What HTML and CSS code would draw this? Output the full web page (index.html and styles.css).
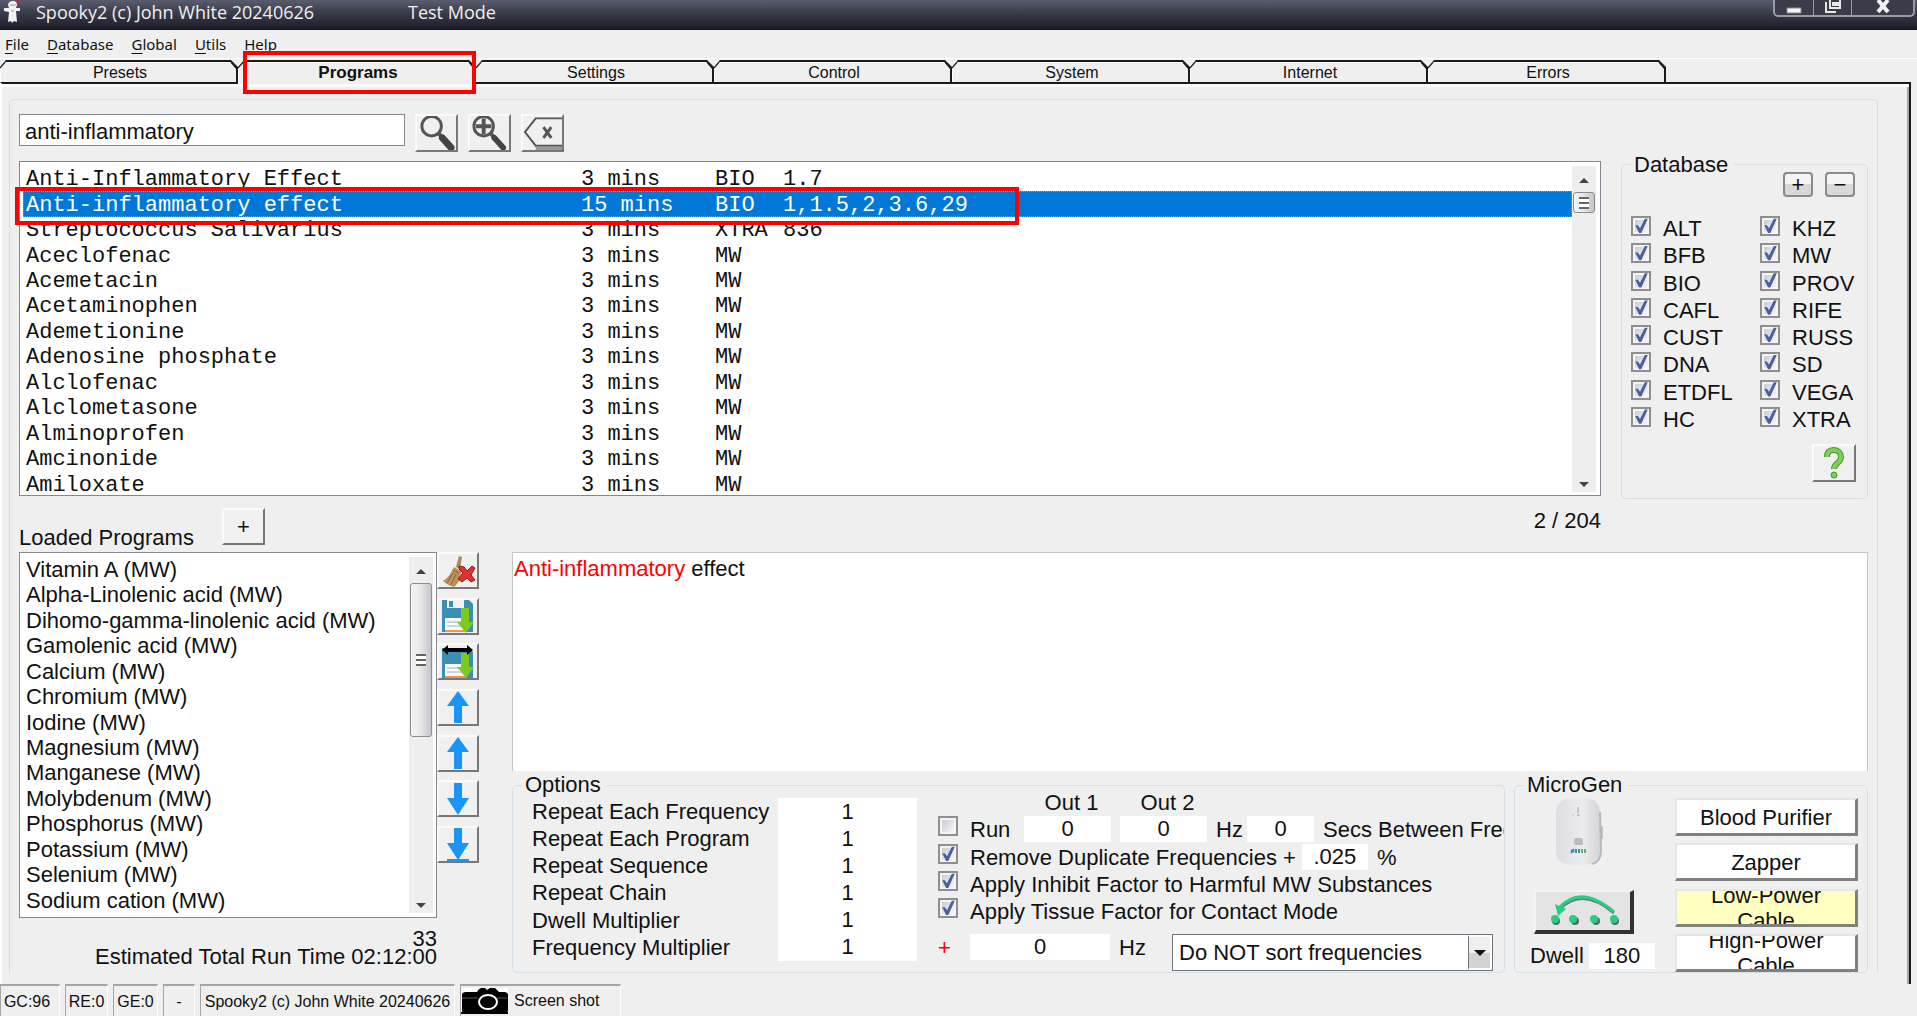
FILE: index.html
```html
<!DOCTYPE html>
<html lang="en">
<head>
    <meta charset="UTF-8">
    <meta name="viewport" content="width=device-width, initial-scale=1.0">
    <title>Spooky2</title>
    <link rel="stylesheet" href="styles.css">
</head>
<body>

    <div class="titlebar">
        <svg class="app-icon" width="18" height="24" viewBox="0 0 18 24">
            <path d="M13 0l3 1-2 4z" fill="#e02020"/>
            <path d="M9 1c3 0 4 2 4 4l-1 3 4 0 0 3-4 0 1 11-3-1-2 2-1-2-3 1 1-10-5-1 0-3 5 0-1-3c0-2 2-4 5-4z" fill="#f2f2f2"/>
            <path d="M6 5h6M7 11l3 0" stroke="#999" fill="none"/>
        </svg>
        <span class="app-name">Spooky2 (c) John White 20240626</span>
        <span>Test Mode</span>
        <div class="window-buttons">
            <button aria-label="Minimize"><svg width="16" height="16" viewBox="0 0 16 16"><rect x="1" y="8" width="14" height="5" fill="#f5f5f5" stroke="#888"/></svg></button>
            <button aria-label="Restore"><svg width="16" height="16" viewBox="0 0 16 16"><path d="M5 0v8h10V0M8 3h5v2H8zM1 2v10h10" fill="none" stroke="#e8e8e8" stroke-width="2"/></svg></button>
            <button class="close" aria-label="Close"><svg width="16" height="16" viewBox="0 0 16 16"><path d="M3 0l10 12M13 0L3 12" stroke="#f2f2f2" stroke-width="4"/></svg></button>
        </div>
    </div>

    <div class="menu">
        <button><u>F</u>ile</button>
        <button><u>D</u>atabase</button>
        <button><u>G</u>lobal</button>
        <button><u>U</u>tils</button>
        <button><u>H</u>elp</button>
    </div>

    <div class="tabs">
        <button class="tab">Presets</button>
        <div class="tab-marked">
            <button class="tab active">Programs</button>
            <div class="mark mark-tab"></div>
        </div>
        <button class="tab">Settings</button>
        <button class="tab">Control</button>
        <button class="tab">System</button>
        <button class="tab">Internet</button>
        <button class="tab">Errors</button>
    </div>

    <div class="page">
        <div class="frame">

            <div class="top">
                <div class="search-area">
                    <div class="search">
                        <input type="text" class="search-box" aria-label="Search" value="anti-inflammatory">
                        <button class="btn" aria-label="Search programs">
                            <svg width="40" height="34" viewBox="0 0 40 34"><circle cx="15" cy="10" r="10" fill="none" stroke="#555" stroke-width="3"/><path d="M22 17l4 5" stroke="#555" stroke-width="4"/><path d="M26 22l9 10" stroke="#444" stroke-width="7" stroke-linecap="round"/></svg>
                        </button>
                        <button class="btn" aria-label="Search more">
                            <svg width="40" height="34" viewBox="0 0 40 34"><circle cx="14" cy="10" r="10" fill="none" stroke="#555" stroke-width="3"/><path d="M14 2v16M6 10h16" stroke="#555" stroke-width="4"/><path d="M21 17l4 5" stroke="#555" stroke-width="4"/><path d="M25 22l9 10" stroke="#444" stroke-width="6" stroke-linecap="round"/></svg>
                        </button>
                        <button class="btn" aria-label="Clear search">
                            <svg width="40" height="34" viewBox="0 0 40 34"><path d="M40 2H13L2 16l11 14h27" fill="none" stroke="#555" stroke-width="2"/><path d="M13 33h27" stroke="#999" stroke-width="4"/><path d="M21 11l8 11M29 11l-8 11" stroke="#555" stroke-width="3"/></svg>
                        </button>
                    </div>

                    <div class="list results">
                        <div class="results-rows">
                            <table>
                                <tr><td class="name">Anti-Inflammatory Effect</td><td class="time">3 mins</td><td class="db">BIO</td><td>1.7</td></tr>
                                <tr class="selected"><td class="name">Anti-inflammatory effect</td><td class="time">15 mins</td><td class="db">BIO</td><td>1,1.5,2,3.6,29</td></tr>
                                <tr><td class="name">Streptococcus Salivarius</td><td class="time">3 mins</td><td class="db">XTRA</td><td>836</td></tr>
                                <tr><td class="name">Aceclofenac</td><td class="time">3 mins</td><td class="db">MW</td><td></td></tr>
                                <tr><td class="name">Acemetacin</td><td class="time">3 mins</td><td class="db">MW</td><td></td></tr>
                                <tr><td class="name">Acetaminophen</td><td class="time">3 mins</td><td class="db">MW</td><td></td></tr>
                                <tr><td class="name">Ademetionine</td><td class="time">3 mins</td><td class="db">MW</td><td></td></tr>
                                <tr><td class="name">Adenosine phosphate</td><td class="time">3 mins</td><td class="db">MW</td><td></td></tr>
                                <tr><td class="name">Alclofenac</td><td class="time">3 mins</td><td class="db">MW</td><td></td></tr>
                                <tr><td class="name">Alclometasone</td><td class="time">3 mins</td><td class="db">MW</td><td></td></tr>
                                <tr><td class="name">Alminoprofen</td><td class="time">3 mins</td><td class="db">MW</td><td></td></tr>
                                <tr><td class="name">Amcinonide</td><td class="time">3 mins</td><td class="db">MW</td><td></td></tr>
                                <tr><td class="name">Amiloxate</td><td class="time">3 mins</td><td class="db">MW</td><td></td></tr>
                            </table>
                        </div>
                        <div class="scrollbar">
                            <span class="arrow up"></span>
                            <span class="thumb"></span>
                            <span class="arrow down"></span>
                        </div>
                        <div class="mark mark-row"></div>
                    </div>

                    <div class="under-list">
                        <span class="loaded-title" id="loadedTitle">Loaded Programs</span>
                        <button class="btn btn-add">+</button>
                        <span class="counter">2 / 204</span>
                    </div>
                </div>

                <fieldset class="database">
                    <legend>Database</legend>
                    <div class="all-none">
                        <button>+</button>
                        <button>−</button>
                    </div>
                    <div class="db-checks">
                        <label class="check"><input type="checkbox" checked>ALT</label>
                        <label class="check"><input type="checkbox" checked>BFB</label>
                        <label class="check"><input type="checkbox" checked>BIO</label>
                        <label class="check"><input type="checkbox" checked>CAFL</label>
                        <label class="check"><input type="checkbox" checked>CUST</label>
                        <label class="check"><input type="checkbox" checked>DNA</label>
                        <label class="check"><input type="checkbox" checked>ETDFL</label>
                        <label class="check"><input type="checkbox" checked>HC</label>
                        <label class="check"><input type="checkbox" checked>KHZ</label>
                        <label class="check"><input type="checkbox" checked>MW</label>
                        <label class="check"><input type="checkbox" checked>PROV</label>
                        <label class="check"><input type="checkbox" checked>RIFE</label>
                        <label class="check"><input type="checkbox" checked>RUSS</label>
                        <label class="check"><input type="checkbox" checked>SD</label>
                        <label class="check"><input type="checkbox" checked>VEGA</label>
                        <label class="check"><input type="checkbox" checked>XTRA</label>
                    </div>
                    <button class="btn btn-help" aria-label="Help">
                        <svg width="24" height="32" viewBox="0 0 24 32"><path d="M5 10C5 4 8 3 12 3s7 3 7 7c0 6-7 6-7 12" fill="none" stroke="#4d8f35" stroke-width="6"/><path d="M5 10C5 4 8 3 12 3s7 3 7 7c0 6-7 6-7 12" fill="none" stroke="#79d155" stroke-width="4"/><circle cx="12" cy="28" r="3" fill="#79d155" stroke="#4d8f35"/></svg>
                    </button>
                </fieldset>
            </div>

            <div class="bottom">
                <div class="loaded">
                    <div class="loaded-main">
                        <div class="list loaded-list">
                            <ul aria-labelledby="loadedTitle">
                                <li>Vitamin A (MW)</li>
                                <li>Alpha-Linolenic acid (MW)</li>
                                <li>Dihomo-gamma-linolenic acid (MW)</li>
                                <li>Gamolenic acid (MW)</li>
                                <li>Calcium (MW)</li>
                                <li>Chromium (MW)</li>
                                <li>Iodine (MW)</li>
                                <li>Magnesium (MW)</li>
                                <li>Manganese (MW)</li>
                                <li>Molybdenum (MW)</li>
                                <li>Phosphorus (MW)</li>
                                <li>Potassium (MW)</li>
                                <li>Selenium (MW)</li>
                                <li>Sodium cation (MW)</li>
                            </ul>
                            <div class="scrollbar">
                                <span class="arrow up"></span>
                                <span class="thumb thumb-long"></span>
                                <span class="arrow down"></span>
                            </div>
                        </div>
                        <div class="side-buttons">
                            <button class="btn" aria-label="Clear loaded programs">
                                <svg width="38" height="34" viewBox="0 0 38 34"><path d="M20 2l3 1-2 12-4-2z" fill="#a88a62"/><path d="M15 13l7 4c0 7-2 12-7 16-4-1-8-3-11-6 5-3 8-8 11-14z" fill="#bb925c"/><path d="M14 16l6 3M14 19L8 29M17 20l-5 11" stroke="#8a653b" fill="none"/><path d="M20 12l5 1 3 4 5-5 3 2-4 7 4 5-4 2-4-4-5 4-4-3 5-6-4-4z" fill="#dc3232" stroke="#a11" /></svg>
                            </button>
                            <button class="btn" aria-label="Save">
                                <svg width="38" height="34" viewBox="0 0 38 34"><path d="M3 1h27l4 4v28H3z" fill="#3b8fb5"/><path d="M8 1h17v8H8z" fill="#eef3f6"/><rect x="10" y="2" width="4" height="6" fill="#3b8fb5"/><path d="M6 19h20v13H6z" fill="#f7f9fb"/><path d="M8 23h15M8 27h15" stroke="#aac"/><path d="M6 32h22" stroke="#e39a54" stroke-width="2"/><path d="M22 9h8v14h5l-8 11-9-11h4z" fill="#7cc91f"/></svg>
                            </button>
                            <button class="btn" aria-label="Save as">
                                <svg width="38" height="34" viewBox="0 0 38 34"><path d="M3 3h27l4 4v26H3z" fill="#3b8fb5"/><path d="M6 19h20v13H6z" fill="#f7f9fb"/><path d="M8 23h15M8 27h15" stroke="#aac"/><path d="M6 32h22" stroke="#e39a54" stroke-width="2"/><path d="M22 8h8v14h5l-8 11-9-11h4z" fill="#7cc91f"/><path d="M3 5l6-5v3h19V0l6 5-6 5V7H9v3z" fill="#000"/></svg>
                            </button>
                            <button class="btn" aria-label="Move to top">
                                <svg width="38" height="34" viewBox="0 0 38 34"><path d="M19 1l11 15h-7v17h-8V16H8z" fill="#1a94f5"/></svg>
                            </button>
                            <button class="btn" aria-label="Move up">
                                <svg width="38" height="34" viewBox="0 0 38 34"><path d="M19 1l11 15h-7v17h-8V16H8z" fill="#1a94f5"/></svg>
                            </button>
                            <button class="btn" aria-label="Move down">
                                <svg width="38" height="34" viewBox="0 0 38 34"><path d="M19 33l11-17h-7V1h-8v15H8z" fill="#1a94f5"/></svg>
                            </button>
                            <button class="btn" aria-label="Move to bottom">
                                <svg width="38" height="34" viewBox="0 0 38 34"><path d="M19 33l11-17h-7V1h-8v15H8z" fill="#1a94f5"/><path d="M8 33h22" stroke="#1a94f5" stroke-width="2"/></svg>
                            </button>
                        </div>
                    </div>
                    <div class="totals">
                        <div>33</div>
                        <div>Estimated Total Run Time 02:12:00</div>
                    </div>
                </div>

                <div class="detail">
                    <div class="notes"><span class="hit">Anti-inflammatory</span> effect</div>

                    <div class="groups">
                        <fieldset class="options">
                            <legend>Options</legend>
                            <div class="repeat">
                                <label for="repFreq">Repeat Each Frequency</label>
                                <input type="text" id="repFreq" value="1">
                                <label for="repProg">Repeat Each Program</label>
                                <input type="text" id="repProg" value="1">
                                <label for="repSeq">Repeat Sequence</label>
                                <input type="text" id="repSeq" value="1">
                                <label for="repChain">Repeat Chain</label>
                                <input type="text" id="repChain" value="1">
                                <label for="dwellMul">Dwell Multiplier</label>
                                <input type="text" id="dwellMul" value="1">
                                <label for="freqMul">Frequency Multiplier</label>
                                <input type="text" id="freqMul" value="1">
                            </div>

                            <div class="flags">
                                <div class="run-row outs">
                                    <span></span>
                                    <label for="out1">Out 1</label>
                                    <label for="out2">Out 2</label>
                                </div>
                                <div class="run-row">
                                    <label class="check"><input type="checkbox">Run</label>
                                    <input type="text" id="out1" value="0">
                                    <input type="text" id="out2" value="0">
                                    <span class="unit">Hz</span>
                                    <input type="text" id="secs" value="0">
                                    <label for="secs" class="secs">Secs Between Frequencies</label>
                                </div>
                                <div class="flag-row">
                                    <label class="check"><input type="checkbox" checked>Remove Duplicate Frequencies +</label>
                                    <input type="text" class="percent" aria-label="Tolerance" value=".025">
                                    <span>%</span>
                                </div>
                                <label class="check"><input type="checkbox" checked>Apply Inhibit Factor to Harmful MW Substances</label>
                                <label class="check"><input type="checkbox" checked>Apply Tissue Factor for Contact Mode</label>
                                <div class="offset-row">
                                    <span class="plus">+</span>
                                    <input type="text" aria-label="Offset" value="0">
                                    <span>Hz</span>
                                    <div class="select-wrap">
                                        <select aria-label="Sort order"><option>Do NOT sort frequencies</option></select>
                                        <span class="select-arrow"></span>
                                    </div>
                                </div>
                            </div>
                        </fieldset>

                        <fieldset class="microgen">
                            <legend>MicroGen</legend>
                            <div class="gen-left">
                                <svg class="device" width="50" height="68" viewBox="0 0 50 68">
                                    <defs><linearGradient id="shell"><stop offset="0" stop-color="#dcdde0"/><stop offset="0.6" stop-color="#ececee"/><stop offset="1" stop-color="#d2d3d6"/></linearGradient></defs>
                                    <rect x="45" y="28" width="4" height="13" rx="1" fill="#c4c5c8"/>
                                    <path d="M12 1Q25-1 37 1 45 3 46 14L47 52Q47 64 38 66 25 68 11 66 2 64 2 52V14Q3 3 12 1z" fill="url(#shell)"/>
                                    <path d="M46 14l1 38q0 12-9 14" fill="none" stroke="#b7b8bb" stroke-width="2"/>
                                    <path d="M24 9v6" stroke="#c6c7c9" stroke-width="2"/>
                                    <path d="M18 17h2" stroke="#9cc" /><path d="M23 17h3" stroke="#d88"/>
                                    <rect x="20" y="40" width="9" height="7" rx="2" fill="#bbbcbf"/>
                                    <path d="M17 52l3 2M20 51l-3 4M22 51v4M25 51v4" stroke="#3b8fae" stroke-width="2"/><path d="M28 51v4M31 51v4" stroke="#5eb06a" stroke-width="2"/>
                                </svg>
                                <button class="btn btn-gen" aria-label="Send to generator">
                                    <svg width="94" height="38" viewBox="0 0 94 38"><path d="M24 17Q46-6 78 21" fill="none" stroke="#777" stroke-width="3"/><path d="M23 16Q45-8 78 20" fill="none" stroke="#27cf83" stroke-width="3"/><path d="M19 12l11 5-8 7z" fill="#27cf83"/><g fill="#666"><circle cx="20" cy="29" r="4"/><circle cx="39" cy="29" r="4"/><circle cx="60" cy="29" r="4"/><circle cx="79" cy="29" r="4"/></g><g fill="#27cf83"><circle cx="19" cy="27" r="4"/><circle cx="37" cy="27" r="4"/><circle cx="58" cy="27" r="4"/><circle cx="78" cy="27" r="4"/></g></svg>
                                </button>
                                <div class="dwell">
                                    <label for="dwell">Dwell</label>
                                    <input type="text" id="dwell" value="180">
                                </div>
                            </div>
                            <div class="gen-buttons">
                                <button class="btn">Blood Purifier</button>
                                <button class="btn">Zapper</button>
                                <button class="btn on">Low-Power<br>Cable</button>
                                <button class="btn">High-Power<br>Cable</button>
                            </div>
                        </fieldset>
                    </div>
                </div>
            </div>

        </div>
    </div>

    <div class="status">
        <span class="gc">GC:96</span>
        <span class="re">RE:0</span>
        <span class="ge">GE:0</span>
        <span class="dash">-</span>
        <span class="version">Spooky2 (c) John White 20240626</span>
        <button class="shot">
            <svg width="47" height="26" viewBox="0 0 47 26"><rect width="47" height="26" fill="#fff"/><path d="M1 7q0-3 4-3h11q1-3 4-4h4l2 2 3-2h5q2 2 4 4h5q4 0 4 3v16q-1 2-3 2H3q-2 0-2-2z" fill="#000"/><path d="M0 25h47" stroke="#000" stroke-width="2"/><path d="M1 10h16M36 10h10" stroke="#555"/><ellipse cx="27" cy="14" rx="9" ry="7" fill="#000" stroke="#fff" stroke-width="2"/></svg>
            Screen shot
        </button>
    </div>

</body>
</html>
```

FILE: styles.css
```css
* {
    box-sizing: border-box;
}
body {
    margin: 0;
    min-height: 100vh;
    display: flex;
    flex-direction: column;
    background-color: #efefef;
    color: #111;
    font-family: "Liberation Sans", Arial, sans-serif;
    font-size: 22px;
    overflow: hidden;
}
button, input, select {
    font-family: inherit;
    font-size: inherit;
    color: inherit;
    margin: 0;
    padding: 0;
    border: none;
    border-radius: 0;
}
button {
    background: none;
}
svg {
    display: block;
}

/* title bar and menu */
.titlebar {
    display: flex;
    height: 30px;
    padding-left: 4px;
    background: linear-gradient(#5a5d70, #3d3f4c 40%, #1c1d28);
    border-bottom: 1px solid #14151e;
    color: #f0f0f0;
    font-family: "Open Sans", sans-serif;
    font-size: 18px;
    line-height: 25px;
}
.app-icon {
    margin-right: 14px;
}
.app-name {
    width: 372px;
}
.window-buttons {
    display: flex;
    height: 17px;
    margin-left: auto;
    margin-right: 2px;
    border: 2px solid #9a9ca6;
    border-top: none;
    border-radius: 0 0 5px 5px;
    background-color: #3a3c49;
}
.window-buttons button {
    display: flex;
    justify-content: center;
    width: 38px;
}
.window-buttons button + button {
    border-left: 1px solid #9a9ca6;
}
.window-buttons .close {
    width: 62px;
}
.menu {
    display: flex;
    gap: 18px;
    height: 29px;
    padding-left: 5px;
    border-bottom: 1px solid #fff;
}
.menu button {
    font-family: "Noto Sans", sans-serif;
    font-size: 15px;
    line-height: 28px;
}
.menu u {
    text-underline-offset: 3px;
}

/* tabs */
.tabs {
    display: flex;
    height: 23px;
    padding-top: 1px;
    position: relative;
    z-index: 1;
}
.tab {
    position: relative;
    width: 238px;
    height: 22px;
    padding-top: 3px;
    padding-left: 2px;
    background-color: #1a1a1a;
    font-size: 16px;
    line-height: 18px;
    clip-path: polygon(0 7px, 6px 0, calc(100% - 7px) 0, 100% 7px, 100% 100%, 0 100%);
    z-index: 0;
}
.tab::before {
    content: "";
    position: absolute;
    inset: 2px 2px 0 0;
    z-index: -1;
    background-color: #efefef;
    border-top: 1px solid #fff;
    border-left: 1px solid #fff;
    clip-path: polygon(0 7px, 6px 0, calc(100% - 6px) 0, 100% 7px, 100% 100%, 0 100%);
}
.tab.active {
    height: 24px;
    padding-top: 1px;
    font-size: 17px;
    font-weight: bold;
}
.tab-marked {
    position: relative;
    height: 22px;
    display: flex;
}
.mark {
    position: absolute;
    border: 4px solid #fe0000;
    pointer-events: none;
}
.mark-tab {
    top: -9px;
    left: 5px;
    width: 233px;
    height: 43px;
}
.mark-row {
    top: 25px;
    left: -5px;
    width: 1004px;
    height: 38px;
}

/* page */
.page {
    flex: 1;
    margin-right: 6px;
    padding: 15px 31px 4px 7px;
    border-top: 2px solid #1a1a1a;
    border-left: 2px solid #fff;
    border-right: 2px solid #1a1a1a;
    box-shadow: inset 0 3px #fafafa, inset -2px 0 #a8a8a8;
}
.frame {
    height: 100%;
    padding: 14px 9px 0;
    border: 1px solid #d5dfe5;
    border-bottom: none;
    border-radius: 5px 5px 0 0;
}
.btn {
    display: flex;
    align-items: center;
    justify-content: center;
    background-color: #f0f0f0;
    border: 2px solid;
    border-color: #fafafa #777 #777 #fafafa;
    overflow: hidden;
    flex-shrink: 0;
}
.list {
    position: relative;
    display: flex;
    background-color: #fff;
    border: 1px solid #828790;
}
.scrollbar {
    display: flex;
    flex-direction: column;
    align-items: center;
    width: 24px;
    background-color: #eee;
}
.arrow {
    border: 5px solid transparent;
}
.arrow.up {
    margin-top: 7px;
    margin-bottom: 9px;
    border-bottom-color: #444;
}
.arrow.down {
    margin-top: auto;
    border-top-color: #444;
}
.thumb {
    display: flex;
    width: 22px;
    height: 21px;
    border: 1px solid #8c8c8c;
    border-radius: 3px;
    background: linear-gradient(90deg, #f5f5f5, #e6e6e6 50%, #c4c4ca);
}
.thumb::before {
    content: "";
    width: 10px;
    height: 12px;
    margin: auto;
    background: repeating-linear-gradient(#666 0 2px, #fff 2px 5px);
}
.thumb-long {
    height: 154px;
}

/* search */
.top {
    display: flex;
    gap: 20px;
}
.search-area {
    flex: 1;
    min-width: 0;
}
.search {
    display: flex;
    gap: 10px;
    height: 38px;
    margin-bottom: 9px;
}
.search-box {
    width: 386px;
    height: 32px;
    padding-left: 5px;
    padding-top: 3px;
    background-color: #fff;
    border: 1px solid #828790;
}
.search .btn {
    width: 43px;
}
.results {
    height: 335px;
    padding: 4px 4px 3px 3px;
}
.results-rows {
    flex: 1;
    height: 331px;
}
.results table {
    width: 100%;
    height: 100%;
    border-collapse: collapse;
    table-layout: fixed;
    font-family: "Liberation Mono", "Courier New", monospace;
    font-size: 22px;
    line-height: 22px;
}
.results td {
    padding: 3px 0 0;
    white-space: nowrap;
}
.results .name {
    width: 558px;
    padding-left: 3px;
}
.results .time {
    width: 134px;
}
.results .db {
    width: 68px;
}
.results .selected {
    background-color: #0078d7;
    color: #fff;
    outline: 1px dotted #f08020;
    outline-offset: -1px;
}
.under-list {
    display: flex;
    align-items: flex-start;
    height: 56px;
    padding-top: 12px;
}
.loaded-title {
    width: 203px;
    padding-top: 17px;
}
.btn-add {
    width: 43px;
    height: 37px;
}
.counter {
    margin-left: auto;
}

/* database filter */
fieldset {
    min-width: 0;
    margin: 0;
    border: 1px solid #d5dfe5;
    border-radius: 5px;
}
.database {
    width: 247px;
    height: 342px;
    margin-top: 43px;
    padding: 0 9px;
}
.database legend {
    padding: 0 6px 0 3px;
    line-height: 15px;
}
.all-none {
    display: flex;
    justify-content: flex-end;
    gap: 12px;
    padding-right: 3px;
    margin-bottom: 19px;
}
.all-none button {
    width: 30px;
    height: 25px;
    border: 2px solid #8a8a8a;
    border-radius: 4px;
    background: linear-gradient(#f4f4f4 50%, #d8d8d8 50%);
    line-height: 20px;
}
.db-checks {
    display: grid;
    grid-template-columns: 129px 1fr;
    grid-template-rows: repeat(8, 1fr);
    grid-auto-flow: column;
    height: 218px;
}
.check {
    display: flex;
    align-items: flex-start;
    gap: 12px;
    line-height: 27px;
    white-space: nowrap;
}
.db-checks .check {
    line-height: 25px;
}
.check input {
    appearance: none;
    flex-shrink: 0;
    position: relative;
    width: 20px;
    height: 20px;
    border: 2px solid #8f8f8f;
    background: linear-gradient(135deg, #c8cdd6, #f6f6f6) content-box, #f4f4f4;
    padding: 2px;
}
.check input:checked::after {
    content: "";
    position: absolute;
    inset: 0;
    background-color: #4a5f9e;
    clip-path: polygon(14% 46%, 30% 46%, 44% 64%, 74% 4%, 92% 4%, 52% 94%, 38% 94%);
}
.btn-help {
    width: 44px;
    height: 38px;
    margin-top: 10px;
    margin-left: auto;
    margin-right: 2px;
}

/* loaded programs */
.bottom {
    display: flex;
    gap: 33px;
}
.loaded {
    width: 460px;
}
.loaded-main {
    display: flex;
    align-items: flex-start;
}
.loaded-list {
    width: 418px;
    height: 366px;
    padding: 4px 3px 4px 6px;
}
.loaded-list ul {
    flex: 1;
    display: grid;
    grid-auto-rows: 1fr;
    margin: 0;
    padding: 0;
    list-style: none;
    line-height: 25px;
}
.side-buttons {
    display: flex;
    flex-direction: column;
    justify-content: space-between;
    height: 311px;
}
.side-buttons .btn {
    width: 42px;
    height: 37px;
}
.totals {
    width: 418px;
    padding-top: 12px;
    text-align: right;
    line-height: 18px;
}

/* description and groups */
.detail {
    flex: 1;
    min-width: 0;
}
.notes {
    height: 219px;
    padding: 3px 1px;
    background-color: #fff;
    border: 1px solid #c5c5c5;
    border-bottom: none;
}
.hit {
    color: #f00;
}
.groups {
    display: flex;
    gap: 9px;
    padding-top: 1px;
}
.groups legend {
    padding: 0 6px 0 3px;
    line-height: 26px;
}
.groups input[type="text"] {
    height: 26px;
    min-width: 0;
    background-color: #fff;
    text-align: center;
}
.options {
    flex: 1;
    display: flex;
    gap: 21px;
    padding: 0 0 0 19px;
}
.options legend {
    margin-left: -10px;
}
.repeat {
    display: grid;
    grid-template-columns: 246px 139px;
    grid-template-rows: repeat(6, 1fr);
    height: 163px;
    line-height: 27px;
}
.groups .repeat input[type="text"] {
    height: 100%;
}
.flags {
    flex: 1;
    min-width: 0;
    line-height: 27px;
}
.run-row {
    display: grid;
    grid-template-columns: 77px 87px 87px 22px 67px minmax(0, 1fr);
    gap: 9px;
    height: 28px;
}
.outs {
    height: 18px;
    padding-left: 4px;
    text-align: center;
    line-height: 10px;
}
.secs {
    overflow: hidden;
    white-space: nowrap;
}
.flag-row {
    display: flex;
    gap: 6px;
    height: 27px;
}
.percent {
    width: 66px;
    margin-right: 3px;
}
.offset-row {
    display: grid;
    grid-template-columns: 23px 140px 44px minmax(0, 321px);
    column-gap: 9px;
    margin-top: 9px;
}
.plus {
    color: #f00;
}
.select-wrap {
    position: relative;
    height: 37px;
}
.select-wrap select {
    appearance: none;
    width: 100%;
    height: 100%;
    padding-left: 6px;
    background-color: #fff;
    border: 1px solid #70757d;
}
.select-arrow {
    position: absolute;
    top: 1px;
    right: 1px;
    bottom: 1px;
    width: 24px;
    display: flex;
    border: 2px solid #fff;
    border-left: 1px solid #70757d;
    background: linear-gradient(#efefef 50%, #d3d3d3 50%);
    pointer-events: none;
}
.select-arrow::before {
    content: "";
    margin: auto;
    border: 6px solid transparent;
    border-top-color: #111;
    border-bottom: none;
}
.microgen {
    display: flex;
    justify-content: space-between;
    width: 354px;
    padding: 0 9px 0 15px;
}
.microgen legend {
    margin-left: -6px;
}
.device {
    margin-left: 24px;
}
.btn-gen {
    width: 100px;
    height: 44px;
    margin: 24px 0 9px 4px;
    border-width: 2px 4px 4px 2px;
    border-color: #f4f4f4 #333 #333 #f4f4f4;
    background-color: #e4e4e4;
}
.dwell {
    display: flex;
    gap: 5px;
}
.dwell input {
    width: 66px;
}
.gen-buttons {
    display: flex;
    flex-direction: column;
    justify-content: space-between;
    width: 183px;
    height: 174px;
}
.gen-buttons .btn {
    height: 38px;
    padding-top: 2px;
    border-width: 2px 3px 3px 2px;
    border-color: #e6e6e6 #808080 #808080 #e6e6e6;
    background-color: #fff;
    line-height: 25px;
}
.gen-buttons .on {
    background-color: #ffffc0;
}

/* status bar */
.status {
    display: flex;
    gap: 5px;
    height: 32px;
    font-size: 16px;
    line-height: 32px;
    white-space: nowrap;
}
.status > * {
    border-top: 2px solid #a5a5a5;
    border-left: 1px solid #a5a5a5;
    border-right: 1px solid #fff;
    text-align: center;
}
.gc {
    width: 60px;
    padding-right: 6px;
}
.re {
    width: 43px;
}
.ge {
    width: 45px;
}
.dash {
    width: 32px;
}
.version {
    width: 255px;
}
.shot {
    display: flex;
    align-items: center;
    gap: 6px;
    width: 161px;
}
```
